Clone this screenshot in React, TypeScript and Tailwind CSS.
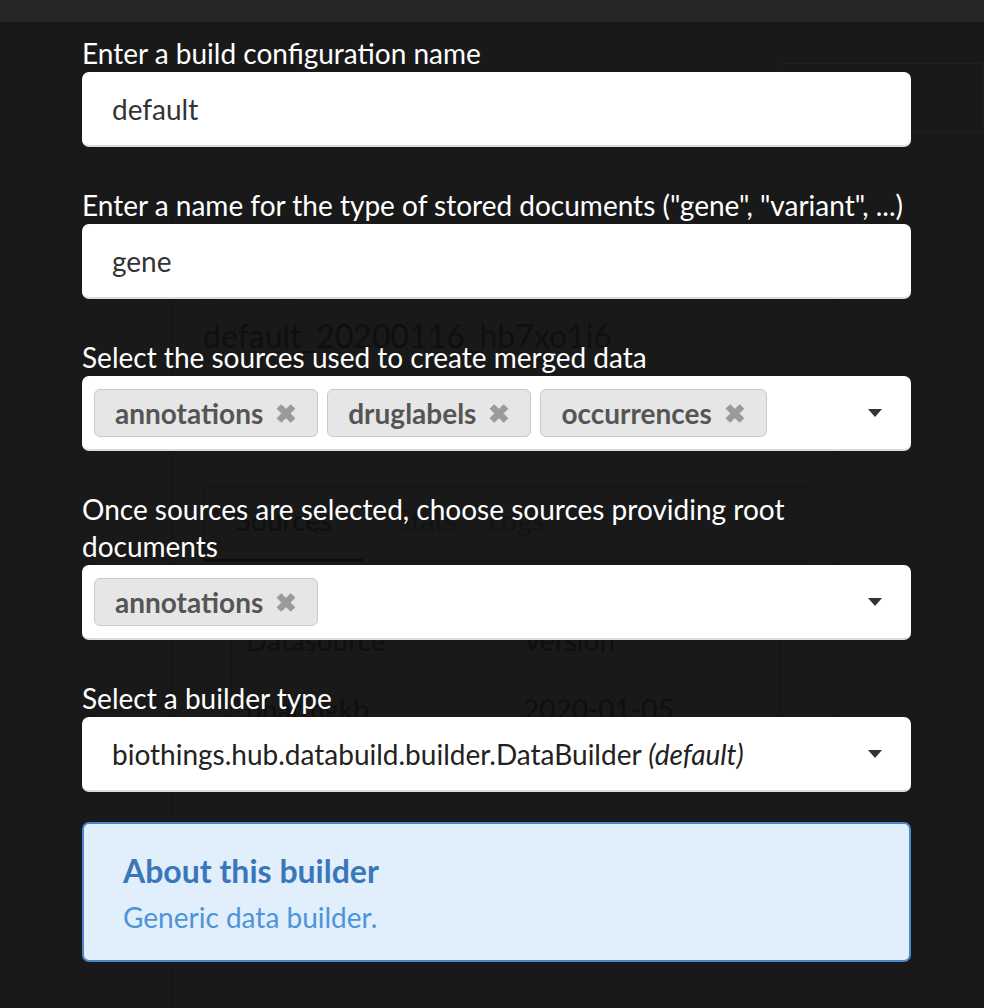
import React from "react";

const font = { fontFamily: "Lato, 'Noto Sans', sans-serif" };

function Caret() {
  return (
    <svg width="14" height="8" viewBox="0 0 14 8" className="shrink-0">
      <path d="M0 0 L14 0 L7 8 Z" fill="#333" />
    </svg>
  );
}

function Chip({ label }: { label: string }) {
  return (
    <div className="flex items-center h-[48px] pl-[20px] pr-[20px] bg-[#e6e6e6] border border-[#c9c9c9] rounded-[6px] text-[#555] font-bold text-[28px] leading-none">
      <span>{label}</span>
      <span className="ml-[12px] text-[#9a9a9a] text-[26px]">✖</span>
    </div>
  );
}

function Label({ children }: { children: React.ReactNode }) {
  return <div className="text-white text-[28px] leading-[37px]">{children}</div>;
}

function Box({ children }: { children: React.ReactNode }) {
  return (
    <div className="h-[75px] bg-white rounded-[7px] border-b-2 border-[#dcdcdc] flex items-center">
      {children}
    </div>
  );
}

export default function App() {
  return (
    <div className="relative w-[984px] h-[1008px] overflow-hidden bg-[#191919]" style={font}>
      {/* dimmed page behind the dialog */}
      <div className="h-[22px] bg-[#262626]" />
      <div className="flex justify-end mt-[41px]">
        <div className="w-[206px] h-[70px] border border-[#1f1f1f] rounded-l-[6px]" />
      </div>
      <div className="ml-[171px] mt-[80px] w-[667px] h-[900px] border-x border-[#151515] pt-[37px] px-[31px]">
        <div className="w-[90px] h-[50px] rounded-[8px] bg-[#21170f]" />
        <div className="mt-[16px] text-[32px] leading-[40px] text-[#0f0f0f]">default_20200116_hb7xo1i6</div>
        <div className="mt-[131px] w-[608px] border border-[#141414] rounded-[6px] h-[75px] flex items-end">
          <div className="w-[159px] border-b-2 border-[#0b0b0b] text-[28px] text-[#0f0f0f] pl-[32px] pb-[18px]">Sources</div>
          <div className="w-[125px] text-[28px] text-[#131313] pl-[33px] pb-[20px]">Stats</div>
          <div className="text-[28px] text-[#131313] pb-[20px]">Logs</div>
        </div>
        <div className="ml-[28px] mt-[38px] w-[550px] border border-[#151515]">
          <div className="flex h-[79px] items-center border-b border-[#151515] text-[28px] text-[#0f0f0f]">
            <div className="w-[291px] pl-[14px]">Datasource</div>
            <div>Version</div>
          </div>
          <div className="flex h-[58px] items-center text-[28px] text-[#0f0f0f]">
            <div className="w-[291px] pl-[14px]">pharmgkb</div>
            <div>2020-01-05</div>
          </div>
        </div>
      </div>

      {/* dialog form over the page */}
      <div className="absolute inset-0 pt-[35px] pl-[82px]">
        <div className="w-[829px] flex flex-col">
          <Label>Enter a build configuration name</Label>
          <Box>
            <span className="pl-[30px] text-[28px] text-[#333]">default</span>
          </Box>

          <div className="mt-[40px]">
            <Label>Enter a name for the type of stored documents ("gene", "variant", ...)</Label>
          </div>
          <Box>
            <span className="pl-[30px] text-[28px] text-[#333]">gene</span>
          </Box>

          <div className="mt-[40px]">
            <Label>Select the sources used to create merged data</Label>
          </div>
          <Box>
            <div className="flex items-center gap-[9px] pl-[12px] flex-1">
              <Chip label="annotations" />
              <Chip label="druglabels" />
              <Chip label="occurrences" />
            </div>
            <div className="pr-[29px]">
              <Caret />
            </div>
          </Box>

          <div className="mt-[40px]">
            <Label>Once sources are selected, choose sources providing root documents</Label>
          </div>
          <Box>
            <div className="flex items-center gap-[9px] pl-[12px] flex-1">
              <Chip label="annotations" />
            </div>
            <div className="pr-[29px]">
              <Caret />
            </div>
          </Box>

          <div className="mt-[40px]">
            <Label>Select a builder type</Label>
          </div>
          <Box>
            <span className="pl-[30px] flex-1 text-[28px] text-[#222]">
              biothings.hub.databuild.builder.DataBuilder <i>(default)</i>
            </span>
            <div className="pr-[29px]">
              <Caret />
            </div>
          </Box>

          <div className="mt-[30px] h-[140px] bg-[#e1effc] border-2 border-[#4a88c9] rounded-[7px] pl-[39px] pt-[28px]">
            <div className="text-[32px] font-bold leading-[38px] text-[#3a77b8]">About this builder</div>
            <div className="mt-[12px] text-[28px] leading-[30px] text-[#4f93d8]">Generic data builder.</div>
          </div>
        </div>
      </div>
    </div>
  );
}
